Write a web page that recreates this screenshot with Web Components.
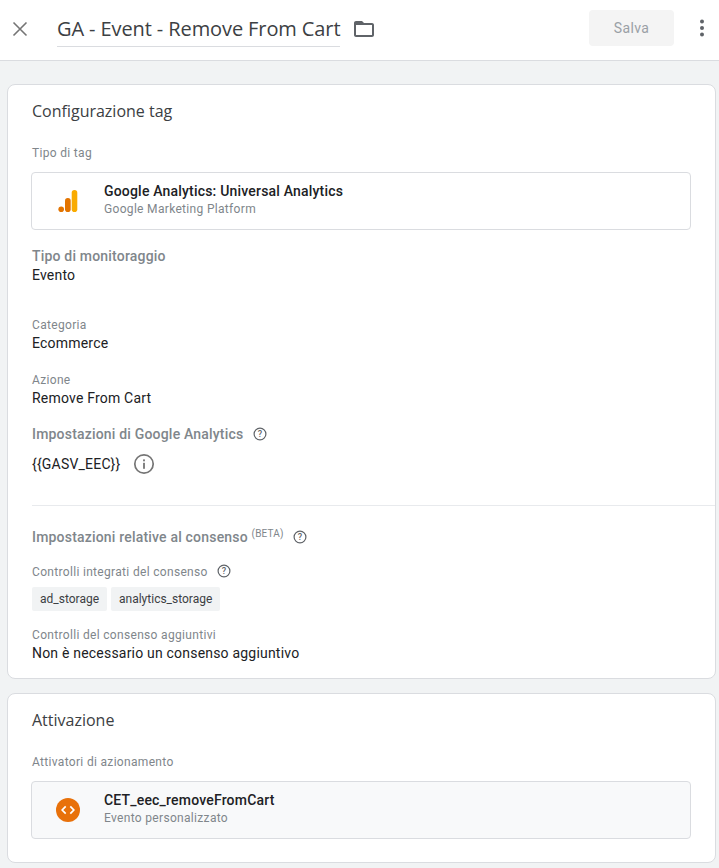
<!DOCTYPE html>
<html lang="it">
<head>
<meta charset="utf-8">
<title>GA - Event - Remove From Cart</title>
<style>
    html, body { margin: 0; padding: 0; }
    body {
        width: 719px;
        height: 868px;
        overflow: hidden;
        background: #f1f3f4;
        font-family: Roboto, "Liberation Sans", sans-serif;
        color: #202124;
    }
</style>
</head>
<body>
<tag-header name="GA - Event - Remove From Cart"></tag-header>

<tag-card heading="Configurazione tag" style="margin-top:23px;padding-bottom:15px">
    <tag-label>Tipo di tag</tag-label>
    <tag-item name="Google Analytics: Universal Analytics" sub="Google Marketing Platform" style="margin-top:11px">
        <svg slot="icon" width="24" height="24" viewBox="0 0 24 24">
            <rect x="15.7" y="1" width="5.6" height="22" rx="2.8" fill="#f9ab00"/>
            <rect x="9" y="9" width="5.7" height="14" rx="2.8" fill="#e37400"/>
            <circle cx="5.2" cy="20.2" r="2.8" fill="#e37400"/>
        </svg>
    </tag-item>
    <tag-heading style="margin-top:16px">Tipo di monitoraggio</tag-heading>
    <tag-value style="margin-top:-1px">Evento</tag-value>
    <tag-label style="margin-top:32px">Categoria</tag-label>
    <tag-value>Ecommerce</tag-value>
    <tag-label style="margin-top:19px">Azione</tag-label>
    <tag-value>Remove From Cart</tag-value>
    <tag-heading style="margin-top:16px">Impostazioni di Google Analytics <tag-help></tag-help></tag-heading>
    <tag-value style="margin-top:9px;display:flex;align-items:center;gap:13px">{{GASV_EEC}}
        <svg width="22" height="22" viewBox="0 0 22 22" fill="none">
            <circle cx="11" cy="11" r="9.2" stroke="#757575" stroke-width="1.7"/>
            <rect x="10.1" y="9.8" width="1.8" height="6" fill="#757575"/>
            <rect x="10.1" y="6.4" width="1.8" height="1.9" fill="#757575"/>
        </svg>
    </tag-value>
    <tag-rule style="margin-top:30px"></tag-rule>
    <tag-heading style="margin-top:21px">Impostazioni relative al consenso <sup>(BETA)</sup> <tag-help></tag-help></tag-heading>
    <tag-label style="margin-top:17px">Controlli integrati del consenso <tag-help></tag-help></tag-label>
    <div style="display:flex;gap:4px;margin-top:7px">
        <tag-chip>ad_storage</tag-chip>
        <tag-chip>analytics_storage</tag-chip>
    </div>
    <tag-label style="margin-top:16px">Controlli del consenso aggiuntivi</tag-label>
    <tag-value>Non è necessario un consenso aggiuntivo</tag-value>
</tag-card>

<tag-card heading="Attivazione" style="margin-top:14px;height:170px">
    <tag-label>Attivatori di azionamento</tag-label>
    <tag-item name="CET_eec_removeFromCart" sub="Evento personalizzato" shaded style="margin-top:11px">
        <svg slot="icon" width="24" height="24" viewBox="0 0 24 24">
            <circle cx="12" cy="12" r="12" fill="#e8710a"/>
            <path d="M9.7 8.4 6.2 12l3.5 3.6M14.3 8.4l3.5 3.6-3.5 3.6" fill="none" stroke="#fff" stroke-width="1.7"/>
        </svg>
    </tag-item>
</tag-card>

<script>
    class TagHeader extends HTMLElement {
        constructor() {
            super();
            const shadow = this.attachShadow({mode: 'open'});
            shadow.innerHTML = `
<style>
    :host {
        display: flex;
        align-items: center;
        box-sizing: border-box;
        height: 61px;
        padding: 0 15px 4px 11px;
        background: #fff;
        border-bottom: 1px solid #dadce0;
    }
    .close { width: 18px; height: 18px; display: block; margin-top: 2px; }
    .name {
        box-sizing: content-box;
        margin: 2px 0 0 28px;
        height: 35px;
        border-bottom: 1px solid #dadce0;
        font: 400 20px/36px "Open Sans", sans-serif;
        letter-spacing: -.1px;
        color: #3c4043;
        white-space: nowrap;
    }
    .folder { margin: 2px 0 0 12px; display: block; }
    .save {
        margin-left: auto;
        width: 85px;
        height: 36px;
        border-radius: 4px;
        background: #f4f4f4;
        color: #9aa0a6;
        font: 400 14px/36px Roboto, sans-serif;
        letter-spacing: .4px;
        text-align: center;
    }
    .more { margin-left: 26px; display: block; }
</style>
<svg class="close" viewBox="0 0 18 18" fill="none" stroke="#757575" stroke-width="1.6">
    <path d="M2.5 2.5l13 13M15.5 2.5l-13 13"/>
</svg>
<div class="name"></div>
<svg class="folder" width="24" height="24" viewBox="0 0 24 24" fill="#5f6368">
    <path d="M20 6h-8l-2-2H4c-1.1 0-2 .9-2 2v12c0 1.1.9 2 2 2h16c1.1 0 2-.9 2-2V8c0-1.1-.9-2-2-2zm0 12H4V8h16v10z"/>
</svg>
<div class="save">Salva</div>
<svg class="more" width="4" height="18" viewBox="0 0 4 18" fill="#5f6368">
    <circle cx="2" cy="2.5" r="2"/><circle cx="2" cy="9" r="2"/><circle cx="2" cy="15.5" r="2"/>
</svg>
`;
            shadow.querySelector('.name').textContent = this.getAttribute('name');
        }
    }

    class TagCard extends HTMLElement {
        constructor() {
            super();
            const shadow = this.attachShadow({mode: 'open'});
            shadow.innerHTML = `
<style>
    :host {
        display: block;
        box-sizing: border-box;
        width: 709px;
        margin-left: 7px;
        padding: 16px 24px 0 24px;
        background: #fff;
        border: 1px solid #dadce0;
        border-radius: 8px;
    }
    h2 {
        margin: 0 0 24px;
        font: 400 16px/20px "Open Sans", sans-serif;
        color: #3c4043;
    }
</style>
<h2></h2>
<slot></slot>
`;
            shadow.querySelector('h2').textContent = this.getAttribute('heading');
        }
    }

    class TagLabel extends HTMLElement {
        constructor() {
            super();
            this.attachShadow({mode: 'open'}).innerHTML = `
<style>
    :host { display: block; font: 400 12px/16px Roboto, sans-serif; color: #80868b; letter-spacing: .32px; }
</style>
<slot></slot>
`;
        }
    }

    class TagHeading extends HTMLElement {
        constructor() {
            super();
            this.attachShadow({mode: 'open'}).innerHTML = `
<style>
    :host { display: block; font: 500 14px/20px Roboto, sans-serif; color: #80868b; letter-spacing: .19px; }
    ::slotted(sup) { font-size: 10px; line-height: 0; font-weight: 400; vertical-align: 5.5px; }
</style>
<slot></slot>
`;
        }
    }

    class TagValue extends HTMLElement {
        constructor() {
            super();
            this.attachShadow({mode: 'open'}).innerHTML = `
<style>
    :host { display: block; font: 400 14px/20px Roboto, sans-serif; color: #202124; letter-spacing: .2px; }
</style>
<slot></slot>
`;
        }
    }

    class TagRule extends HTMLElement {
        constructor() {
            super();
            this.attachShadow({mode: 'open'}).innerHTML = `
<style>
    :host { display: block; height: 1px; background: #e8eaed; margin-right: -24px; }
</style>
`;
        }
    }

    class TagHelp extends HTMLElement {
        constructor() {
            super();
            this.attachShadow({mode: 'open'}).innerHTML = `
<style>
    :host { display: inline-block; width: 14px; height: 14px; margin-left: 6px; vertical-align: -2px; }
    svg { display: block; }
    text { font: 500 9px Roboto, sans-serif; fill: #5f6368; }
</style>
<svg width="14" height="14" viewBox="0 0 14 14" fill="none">
    <circle cx="7" cy="7" r="5.9" stroke="#5f6368" stroke-width="1.2"/>
    <text x="7" y="10.2" text-anchor="middle">?</text>
</svg>
`;
        }
    }

    class TagChip extends HTMLElement {
        constructor() {
            super();
            this.attachShadow({mode: 'open'}).innerHTML = `
<style>
    :host {
        display: block;
        height: 24px;
        padding: 0 8px;
        background: #f1f3f4;
        border-radius: 2px;
        font: 400 12px/24px Roboto, sans-serif;
        color: #3c4043;
    }
</style>
<slot></slot>
`;
        }
    }

    class TagItem extends HTMLElement {
        constructor() {
            super();
            const shadow = this.attachShadow({mode: 'open'});
            shadow.innerHTML = `
<style>
    :host {
        display: flex;
        align-items: center;
        box-sizing: border-box;
        height: 58px;
        margin-left: -1px;
        padding-left: 24px;
        background: #fff;
        border: 1px solid #dadce0;
        border-radius: 4px;
    }
    :host([shaded]) { background: #f8f9fa; }
    .icon { width: 24px; height: 24px; margin-right: 24px; }
    .text { padding-bottom: 3px; }
    .name { font: 500 14px/18px Roboto, sans-serif; color: #202124; letter-spacing: .19px; margin-bottom: 1px; }
    .sub { font: 400 12px/16px Roboto, sans-serif; color: #80868b; letter-spacing: .32px; }
</style>
<div class="icon"><slot name="icon"></slot></div>
<div class="text">
    <div class="name"></div>
    <div class="sub"></div>
</div>
`;
            shadow.querySelector('.name').textContent = this.getAttribute('name');
            shadow.querySelector('.sub').textContent = this.getAttribute('sub');
        }
    }

    customElements.define('tag-header', TagHeader);
    customElements.define('tag-card', TagCard);
    customElements.define('tag-label', TagLabel);
    customElements.define('tag-heading', TagHeading);
    customElements.define('tag-value', TagValue);
    customElements.define('tag-rule', TagRule);
    customElements.define('tag-help', TagHelp);
    customElements.define('tag-chip', TagChip);
    customElements.define('tag-item', TagItem);
</script>
</body>
</html>
